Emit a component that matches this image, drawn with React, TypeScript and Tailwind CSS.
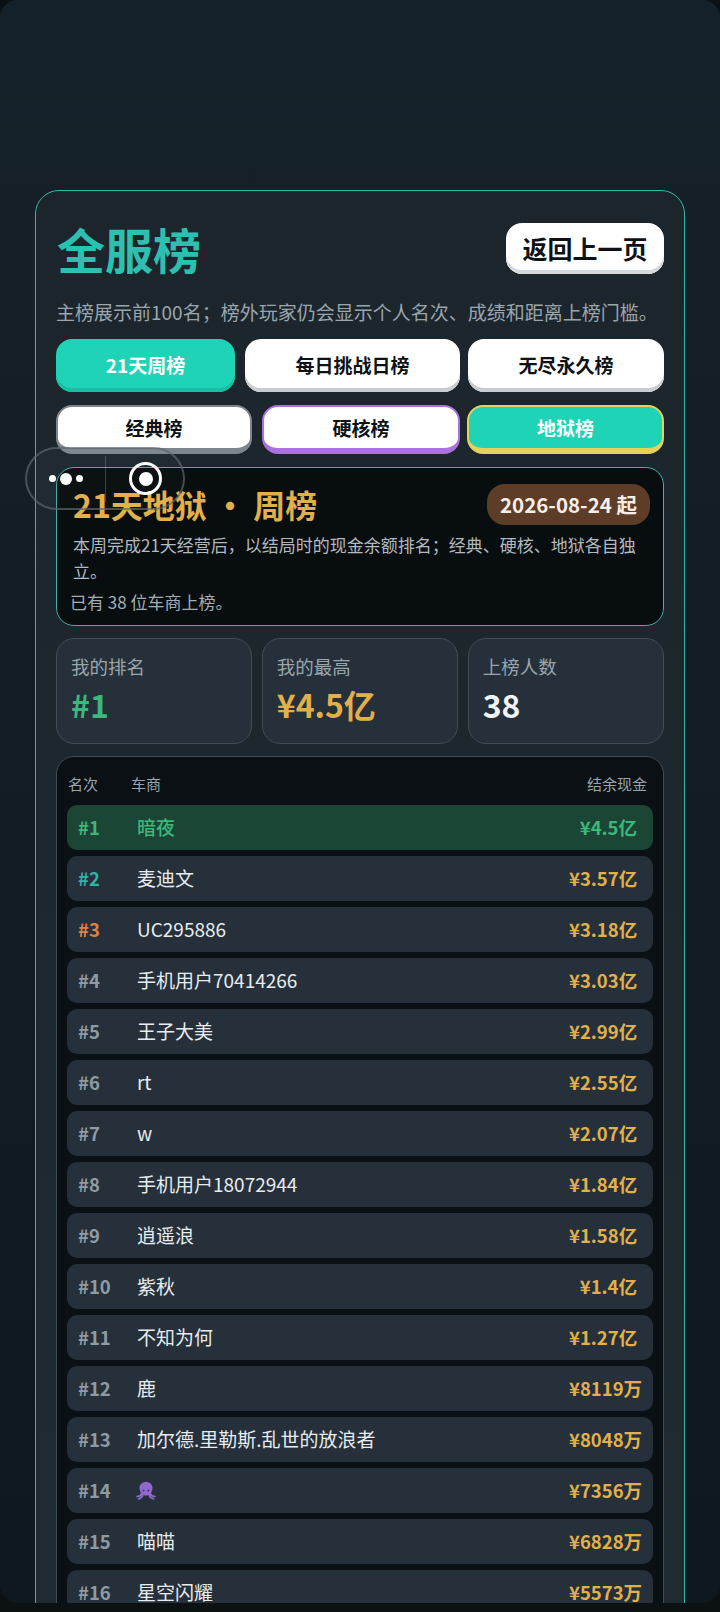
const rows: [string, string, string][] = [
  ["#2", "麦迪文", "¥3.57亿"],
  ["#3", "UC295886", "¥3.18亿"],
  ["#4", "手机用户70414266", "¥3.03亿"],
  ["#5", "王子大美", "¥2.99亿"],
  ["#6", "rt", "¥2.55亿"],
  ["#7", "w", "¥2.07亿"],
  ["#8", "手机用户18072944", "¥1.84亿"],
  ["#9", "逍遥浪", "¥1.58亿"],
  ["#10", "紫秋", "¥1.4亿"],
  ["#11", "不知为何", "¥1.27亿"],
  ["#12", "鹿", "¥8119万"],
  ["#13", "加尔德.里勒斯.乱世的放浪者", "¥8048万"],
  ["#14", "", "¥7356万"],
  ["#15", "喵喵", "¥6828万"],
  ["#16", "星空闪耀", "¥5573万"],
];

function Octopus() {
  return (
    <svg width="20" height="20" viewBox="0 0 20 20" className="-ml-[1px]">
      <path d="M10 1C6 1 3.500 3.500 3.500 7c0 2.500 1 4.500 2.300 6 .8.900 2.400 1.500 4.200 1.500s3.400-.6 4.200-1.500c1.300-1.500 2.300-3.500 2.300-6 0-3.500-2.500-6-6.500-6z" fill="#9268cf" />
      <path d="M6 12.500c-1 2-2.700 3-5 3M7 13.500c-.6 2.300-2.200 3.800-4.500 4.500M13 13.500c.6 2.300 2.200 3.800 4.500 4.500M14 12.500c1 2 2.700 3 5 3" fill="none" stroke="#9268cf" strokeWidth="1.700" strokeLinecap="round" />
      <circle cx="7.600" cy="9.500" r="1" fill="#3f3160" />
      <circle cx="12.400" cy="9.500" r="1" fill="#3f3160" />
    </svg>
  );
}

function Row({ rank, name, money, rankColor }: { rank: string; name: string; money: string; rankColor?: string }) {
  return (
    <div className="flex h-[45px] shrink-0 items-center rounded-[10px] bg-[#25303a] pr-[16px] pl-[11px]">
      <span className={`w-[59px] shrink-0 text-[18.5px] font-bold ${rankColor ?? "text-[#8f9ba3]"}`}>{rank}</span>
      <span className="flex-1 text-[19px] text-[#e8ecef]">{name || <Octopus />}</span>
      <span className="w-[68px] text-right text-[18.5px] font-bold whitespace-nowrap text-[#e2b04a]">{money}</span>
    </div>
  );
}

function Stat({ label, value, color }: { label: string; value: string; color: string }) {
  return (
    <div className="flex h-[106px] flex-col rounded-[18px] border border-[#414d56] bg-[#25303a] pt-[14px] pl-[14px]">
      <span className="text-[18.5px] leading-[26px] text-[#9aa5ac]">{label}</span>
      <span className={`mt-[4px] text-[32px] leading-[42px] font-bold ${color}`}>{value}</span>
    </div>
  );
}

function Tab({ label, className }: { label: string; className: string }) {
  return (
    <div className={`flex items-center justify-center rounded-[16px] text-[19px] font-bold ${className}`}>{label}</div>
  );
}

export default function App() {
  return (
    <div
      className="relative h-[1612px] overflow-hidden bg-[#0c1114]"
      style={{ fontFamily: '"Noto Sans CJK SC", "Noto Sans", sans-serif' }}
    >
      <div className="h-[1603px] overflow-hidden rounded-[18px] bg-gradient-to-b from-[#15212a] via-[#131c23] to-[#0f181e] px-[35px] pt-[190px]">
        <div className="rounded-[24px] border border-[#37b5a9] bg-gradient-to-b from-[#1c252c] to-[#202a31] px-[20px] pt-[32px] pb-[40px]">
          <div className="flex items-start justify-between">
            <h1 className="-mt-[3px] pl-[1px] text-[48px] leading-[56px] font-bold text-[#2ebfb0]">全服榜</h1>
            <div className="flex h-[51px] w-[158px] items-center justify-center rounded-[16px] bg-white text-[25px] font-bold text-[#0c1216] shadow-[inset_0_-4px_0_#d6d9db]">
              返回上一页
            </div>
          </div>
          <p className="mt-[22px] text-[19px] leading-[28px] whitespace-nowrap text-[#9aa5ac]">
            主榜展示前100名；榜外玩家仍会显示个人名次、成绩和距离上榜门槛。
          </p>
          <div className="mt-[13px] flex h-[53px]">
            <Tab label="21天周榜" className="w-[179px] bg-[#1fd4b6] text-white shadow-[inset_0_-4px_0_#19bda3]" />
            <Tab label="每日挑战日榜" className="ml-[10px] w-[215px] bg-white text-[#0c1216] shadow-[inset_0_-4px_0_#c9cdd0]" />
            <Tab label="无尽永久榜" className="ml-[8px] flex-1 bg-white text-[#0c1216] shadow-[inset_0_-4px_0_#c9cdd0]" />
          </div>
          <div className="mt-[13px] flex h-[49px]">
            <Tab label="经典榜" className="w-[196px] border-2 border-b-[6px] border-[#7c868c] bg-white pt-[2px] text-[#0c1216]" />
            <Tab label="硬核榜" className="ml-[10px] w-[198px] border-2 border-b-[6px] border-[#ab72dc] bg-white pt-[2px] text-[#0c1216]" />
            <Tab label="地狱榜" className="ml-[7px] flex-1 border-2 border-b-[6px] border-[#e5d25a] bg-[#1fd4b6] pt-[2px] text-white" />
          </div>
          <div className="mt-[13px] h-[159px] rounded-[18px] border border-[#3fb0a4] bg-[#080d10] pt-[15px] pr-[13px] pl-[13px]">
            <div className="flex items-center justify-between">
              <span className="pl-[3px] text-[32px] leading-[42px] font-bold text-[#e2b04a]">21天地狱 · 周榜</span>
              <span className="flex h-[41px] w-[163px] items-center justify-center rounded-[18px] bg-[#5e3d28] text-[20.5px] font-semibold text-[#f5efe8]">
                2026-08-24 起
              </span>
            </div>
            <p className="mt-[7px] pl-[3px] text-[17px] leading-[26px] text-[#b2babf]">
              本周完成21天经营后，以结局时的现金余额排名；经典、硬核、地狱各自独立。
            </p>
            <p className="mt-[5px] text-[17px] leading-[26px] text-[#a3adb3]">已有 38 位车商上榜。</p>
          </div>
          <div className="mt-[12px] grid grid-cols-3 gap-[9.5px]">
            <Stat label="我的排名" value="#1" color="text-[#3db77c]" />
            <Stat label="我的最高" value="¥4.5亿" color="text-[#e2b04a]" />
            <Stat label="上榜人数" value="38" color="text-[#f2f4f5]" />
          </div>
          <div className="mt-[12px] rounded-[18px] border border-[#414d56] bg-[#0a1014] px-[10px] pb-[20px]">
            <div className="flex h-[48px] items-center pt-[6px] pr-[6px] pl-[1px] text-[15px] text-[#9aa5ac]">
              <span className="w-[63px]">名次</span>
              <span className="flex-1">车商</span>
              <span>结余现金</span>
            </div>
            <div className="flex flex-col gap-[6px]">
              <div className="flex h-[45px] items-center rounded-[10px] bg-[#1b4534] pr-[16px] pl-[11px] text-[#3db77c]">
                <span className="w-[59px] shrink-0 text-[18.5px] font-bold">#1</span>
                <span className="flex-1 text-[19px] font-medium">暗夜</span>
                <span className="w-[68px] text-right text-[18.5px] font-bold whitespace-nowrap">¥4.5亿</span>
              </div>
              {rows.map(([r, n, m], i) => (
                <Row key={r} rank={r} name={n} money={m} rankColor={i === 0 ? "text-[#2fb3ad]" : i === 1 ? "text-[#e0813f]" : undefined} />
              ))}
            </div>
          </div>
        </div>
      </div>
      <div className="absolute top-[447px] left-[25px] flex h-[63px] w-[160px] items-center rounded-[32px] border-2 border-[#5b666c]/70 bg-white/[0.02]">
        <div className="flex w-[78px] items-center justify-center gap-[4px]">
          <i className="size-[7px] rounded-full bg-white" />
          <i className="size-[12px] rounded-full bg-white" />
          <i className="size-[7px] rounded-full bg-white" />
        </div>
        <div className="h-[46px] w-px bg-white/20" />
        <div className="ml-[23px] flex size-[33px] items-center justify-center rounded-full border-[3px] border-white">
          <i className="size-[14px] rounded-full bg-white" />
        </div>
      </div>
    </div>
  );
}
